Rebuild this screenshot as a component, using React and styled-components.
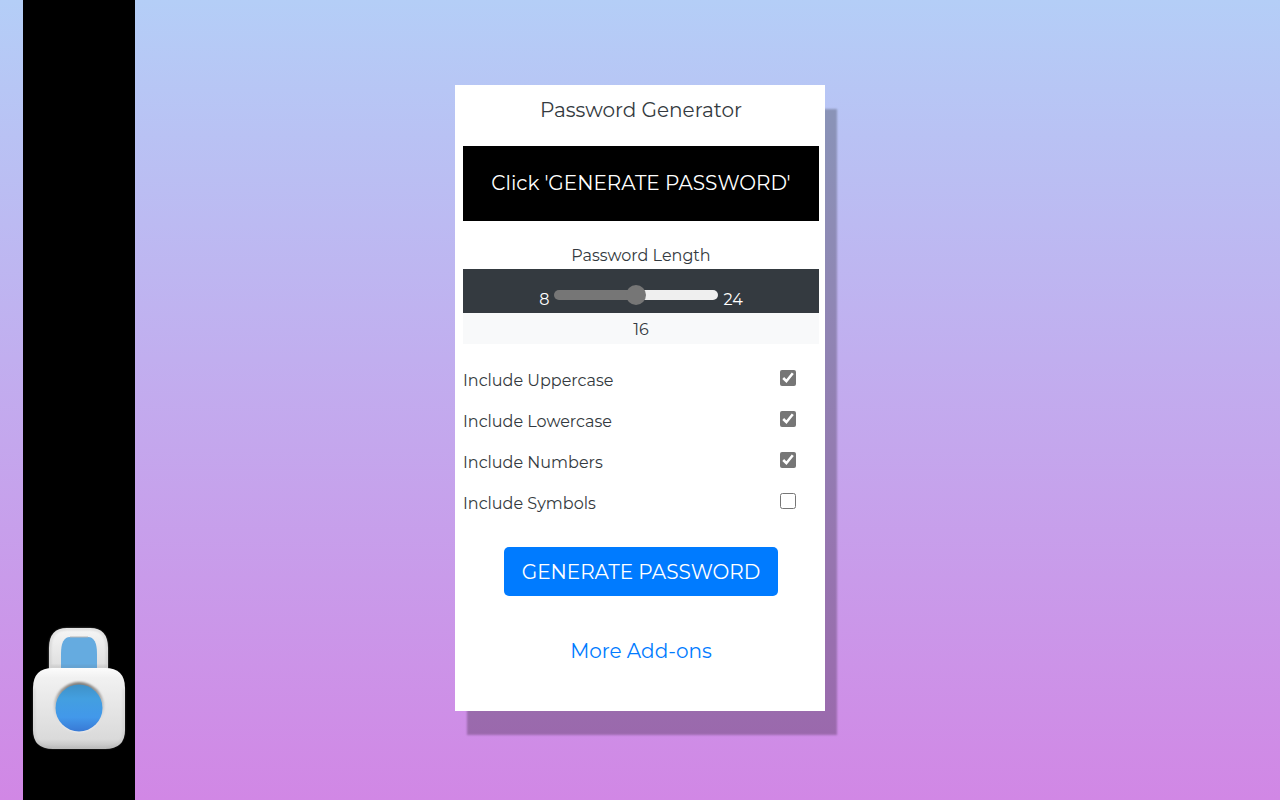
import React, { useState } from "react"
import styled, { createGlobalStyle } from "styled-components"

const GlobalStyle = createGlobalStyle`
  * {
    box-sizing: border-box;
  }
  body {
    margin: 0;
    color: #343a40;
    font-family: Montserrat, Inter, sans-serif;
    font-size: 16px;
    font-weight: 400;
    line-height: 24px;
  }
`

const Page = styled.div`
  min-height: 100vh;
  padding-left: 23px;
  display: grid;
  grid-template-columns: 112px 1fr 135px;
  background: linear-gradient(180deg, #b4cef7, #d187e5);
`

const Sidebar = styled.aside`
  display: flex;
  flex-direction: column;
  justify-content: flex-end;
  align-items: center;
  padding-bottom: 50px;
  background: #000;
`

const Main = styled.main`
  display: flex;
  justify-content: center;
  align-items: flex-start;
  padding: 85px 0 48px;
`

const Card = styled.section`
  width: 370px;
  padding: 13px 6px 48px 8px;
  display: flex;
  flex-direction: column;
  text-align: center;
  background: #fff;
  box-shadow: 12px 24px 2px rgba(0, 0, 0, 0.25);
`

const Title = styled.h1`
  margin: 0 0 24px;
  font-size: 20px;
  font-weight: 400;
  line-height: 24px;
`

const Output = styled.output`
  padding: 25px 0 26px;
  margin-bottom: 23px;
  color: #fff;
  background: #000;
  font-size: 20px;
`

const LengthLabel = styled.label`
  padding-bottom: 1px;
`

const RangeBar = styled.div`
  height: 44px;
  padding-top: 16px;
  display: flex;
  justify-content: center;
  align-items: flex-start;
  gap: 5px;
  color: #fff;
  background: #343a40;
  line-height: 30px;
`

const Range = styled.input`
  appearance: none;
  width: 164px;
  height: 20px;
  margin: 0;
  background: none;

  &::-webkit-slider-runnable-track {
    height: 10px;
    border-radius: 5px;
    background: linear-gradient(
      to right,
      #767676 ${props => props.$fill}%,
      #efefef ${props => props.$fill}%
    );
  }
  &::-webkit-slider-thumb {
    appearance: none;
    width: 20px;
    height: 20px;
    margin-top: -5px;
    border-radius: 50%;
    background: #767676;
  }
`

const Value = styled.div`
  padding: 5px 0 2px;
  background: #f8f9fa;
`

const Options = styled.div`
  padding: 25px 23px 0 0;
  display: grid;
  gap: 17px;
`

const Option = styled.label`
  display: flex;
  justify-content: space-between;
  align-items: flex-start;
`

const Check = styled.input`
  width: 16px;
  height: 16px;
  margin: 1px 0 0;
  accent-color: #767676;
`

const Generate = styled.button`
  align-self: center;
  height: 49px;
  margin: 31px 0 43px;
  padding: 0 18px;
  border: 0;
  border-radius: 5px;
  color: #fff;
  background: #007bff;
  font: inherit;
  font-size: 20px;
  cursor: pointer;
`

const MoreLink = styled.a`
  align-self: center;
  color: #007bff;
  font-size: 20px;
  text-decoration: none;
`

const Lock = () => (
  <svg width="96" height="124" viewBox="0 0 96 124" aria-hidden="true">
    <defs>
      <linearGradient id="shackle" x2="0" y2="1">
        <stop offset="0" stopColor="#f6f6f6" />
        <stop offset="1" stopColor="#d9d9d9" />
      </linearGradient>
      <linearGradient id="body" x2="0" y2="1">
        <stop offset="0" stopColor="#fcfcfc" />
        <stop offset="0.12" stopColor="#f1f1f1" />
        <stop offset="0.88" stopColor="#dadada" />
        <stop offset="1" stopColor="#bdbdbd" />
      </linearGradient>
      <linearGradient id="dial" x2="0" y2="1">
        <stop offset="0" stopColor="#3f91c7" />
        <stop offset="0.3" stopColor="#439fe0" />
        <stop offset="0.7" stopColor="#4298ea" />
        <stop offset="1" stopColor="#3879d5" />
      </linearGradient>
      <linearGradient id="rim" x2="0" y2="1">
        <stop offset="0" stopColor="#7d7873" />
        <stop offset="0.5" stopColor="#c8c8c8" />
        <stop offset="1" stopColor="#f5f5f5" />
      </linearGradient>
      <filter id="soft">
        <feGaussianBlur stdDeviation="1" />
      </filter>
    </defs>
    <path
      d="M18 50V22Q18 2 36 2H59Q77 2 77 22V50Z"
      fill="url(#shackle)"
    />
    <path
      d="M19 46V22Q19 3 36 3H59Q76 3 76 22V46"
      fill="none"
      stroke="#bcbcbc"
      filter="url(#soft)"
    />
    <path d="M30 44V28Q30 11 39 11H57Q66 11 66 28V44Z" fill="#65abe0" />
    <path d="M39 11H57" stroke="#b6b6b6" />
    <rect x="20" y="39" width="56" height="4" fill="#666" opacity="0.12" filter="url(#soft)" />
    <path
      d="M22 42H74Q94 42 94 62V104Q94 123 74 123H22Q2 123 2 104V62Q2 42 22 42Z"
      fill="url(#body)"
    />
    <path
      d="M3 62V104Q3 122 22 122H74Q93 122 93 104V62"
      fill="none"
      stroke="#aaa"
      opacity="0.6"
      filter="url(#soft)"
    />
    <circle cx="48" cy="81" r="25" fill="url(#rim)" filter="url(#soft)" />
    <circle cx="48" cy="82" r="23.5" fill="url(#dial)" />
  </svg>
)

const options = [
  { id: "uppercase", label: "Include Uppercase", checked: true },
  { id: "lowercase", label: "Include Lowercase", checked: true },
  { id: "numbers", label: "Include Numbers", checked: true },
  { id: "symbols", label: "Include Symbols", checked: false },
]

const App = () => {
  const [length, setLength] = useState(16)

  return (
    <>
      <GlobalStyle />
      <Page>
        <Sidebar>
          <Lock />
        </Sidebar>
        <Main>
          <Card>
            <Title>Password Generator</Title>
            <Output>Click 'GENERATE PASSWORD'</Output>
            <LengthLabel htmlFor="length">Password Length</LengthLabel>
            <RangeBar>
              <span>8</span>
              <Range
                id="length"
                type="range"
                min="8"
                max="24"
                value={length}
                $fill={((length - 8) / 16) * 100}
                onChange={event => setLength(Number(event.target.value))}
              />
              <span>24</span>
            </RangeBar>
            <Value>{length}</Value>
            <Options>
              {options.map(option => (
                <Option key={option.id} htmlFor={option.id}>
                  {option.label}
                  <Check
                    id={option.id}
                    type="checkbox"
                    defaultChecked={option.checked}
                  />
                </Option>
              ))}
            </Options>
            <Generate type="button">GENERATE PASSWORD</Generate>
            <MoreLink href="#">More Add-ons</MoreLink>
          </Card>
        </Main>
      </Page>
    </>
  )
}

export default App
